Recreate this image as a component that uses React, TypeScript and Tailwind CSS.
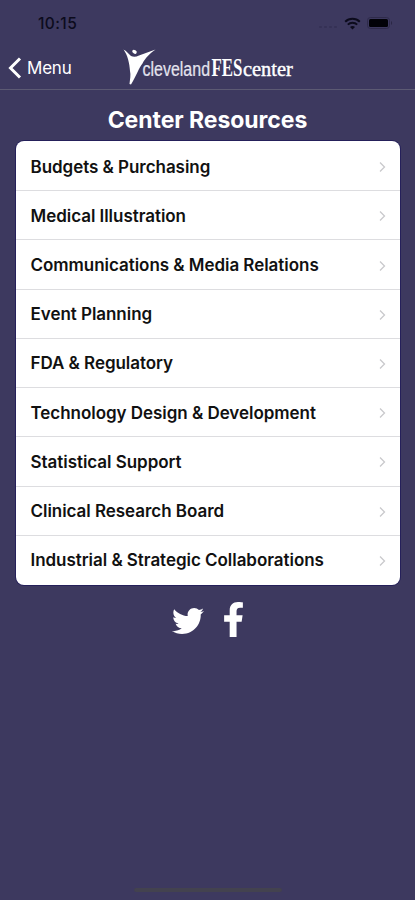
import { FaFacebookF, FaTwitter } from "react-icons/fa";

const RESOURCES = [
  "Budgets & Purchasing",
  "Medical Illustration",
  "Communications & Media Relations",
  "Event Planning",
  "FDA & Regulatory",
  "Technology Design & Development",
  "Statistical Support",
  "Clinical Research Board",
  "Industrial & Strategic Collaborations",
] as const;

function StatusBar() {
  return (
    <div className="flex h-[46px] items-center justify-between pr-[22px] pl-[38px] text-[#0c0b1c]">
      <span className="pt-px text-[15.5px] leading-none font-medium tracking-[0.4px]">
        10:15
      </span>
      <div className="flex items-center">
        {/* 電波なし */}
        <div className="mt-2 mr-[7px] flex gap-[2px]">
          <span className="h-[2px] w-[3px] rounded-full bg-[#353155]" />
          <span className="h-[2px] w-[3px] rounded-full bg-[#353155]" />
          <span className="h-[2px] w-[3px] rounded-full bg-[#353155]" />
          <span className="h-[2px] w-[3px] rounded-full bg-[#353155]" />
        </div>
        <svg width="17" height="13" viewBox="0 0 17 13" fill="none">
          <path
            d="M1.2 4.7C5.2.8 11.8.8 15.8 4.7M3.8 7.6c2.6-2.5 6.8-2.5 9.4 0"
            stroke="currentColor"
            strokeWidth="2"
          />
          <path d="M8.5 12.5 6 10c1.4-1.3 3.6-1.3 5 0Z" fill="currentColor" />
        </svg>
        <svg
          className="ml-[6px]"
          width="26"
          height="12"
          viewBox="0 0 26 12"
          fill="none"
        >
          <rect x=".5" y=".5" width="22" height="11" rx="3" stroke="#2f2b4b" />
          <rect x="2" y="2" width="19" height="8" rx="1.5" fill="#020208" />
          <path d="M24 4v4c1.4-.6 1.4-3.4 0-4Z" fill="#2a2744" />
        </svg>
      </div>
    </div>
  );
}

function Logo() {
  return (
    <svg
      width="174"
      height="40"
      viewBox="0 0 174 40"
      fill="#fff"
      role="img"
      aria-label="Cleveland FES Center"
    >
      <path d="M.5 3.500C3.500 5 5.500 8 8 10c2.500 1.200 5 1 8-.5L32.500 3.500C27 7 22 12.500 19.500 17.500c-3.500 4-6 12-11.500 21L6.500 38c.5-5 1.500-9 .5-13C6.500 17 4.500 9 .5 3.500Z" />
      <ellipse
        cx="11.500"
        cy="5.800"
        rx="2.400"
        ry="1.800"
        transform="rotate(30 11.500 5.800)"
      />
      <text
        transform="translate(19.5 30) scale(.82 1)"
        fontSize="19.500"
        fill="#e4e3ee"
        stroke="#e4e3ee"
        strokeWidth=".2"
        fontFamily='"Liberation Sans", sans-serif'
      >
        cleveland
      </text>
      <text
        transform="translate(88.5 30) scale(.65 1)"
        fontSize="26"
        fontWeight="bold"
        fontFamily='"Liberation Serif", serif'
      >
        FES
      </text>
      <text
        transform="translate(120 30) scale(1.02 1)"
        fontSize="20"
        fontFamily='"Liberation Serif", serif'
        stroke="#fff"
        strokeWidth=".4"
      >
        center
      </text>
    </svg>
  );
}

function Header() {
  return (
    <header className="grid h-[44px] grid-cols-[123px_174px_1fr] border-b border-[#5c5a73] text-white">
      <a className="flex items-center pl-[8px]">
        <svg width="14" height="22" viewBox="0 0 14 22" fill="none">
          <path d="M12 1.500 2.500 11 12 20.500" stroke="#fff" strokeWidth="3" />
        </svg>
        <span className="ml-[5px] pt-px text-[17px] leading-none tracking-[-0.2px]">
          Menu
        </span>
      </a>
      <Logo />
    </header>
  );
}

function ResourceRow({ label }: { label: string }) {
  return (
    <li className="flex items-center justify-between border-b border-[#dddde0] pt-[2px] pr-[14px] pl-[15px] last:border-b-0 last:pt-px">
      <span className="text-[17px] leading-none font-semibold tracking-[-0.04px] whitespace-nowrap text-[#111]">
        {label}
      </span>
      <svg width="7" height="12" viewBox="0 0 7 12" fill="none">
        <path d="m1 1.500 4.500 4.500L1 10.500" stroke="#c9c9cc" strokeWidth="1.300" />
      </svg>
    </li>
  );
}

export default function App() {
  return (
    <div className="flex h-[900px] w-[415px] flex-col overflow-hidden bg-[#3d395f] font-[Inter,sans-serif]">
      <StatusBar />
      <Header />
      <main className="flex flex-1 flex-col items-center">
        <h1 className="mt-[17px] text-[23px] leading-[26px] font-bold tracking-[-0.05px] text-white">
          Center Resources
        </h1>
        <ul className="mt-[8px] grid h-[444px] w-[384px] auto-rows-fr overflow-hidden rounded-[8px] bg-white pt-px shadow-[0_0_0_1px_#25205a]">
          {RESOURCES.map((label) => (
            <ResourceRow key={label} label={label} />
          ))}
        </ul>
        {/* SNSリンク */}
        <div className="mt-[16px] flex items-center pl-[8px] text-white">
          <FaTwitter size={32} className="mt-[4px]" />
          <FaFacebookF size={35} className="ml-[12px]" />
        </div>
      </main>
      <div className="mb-[8px] h-[4px] w-[148px] self-center rounded-full bg-[#43424f]" />
    </div>
  );
}
